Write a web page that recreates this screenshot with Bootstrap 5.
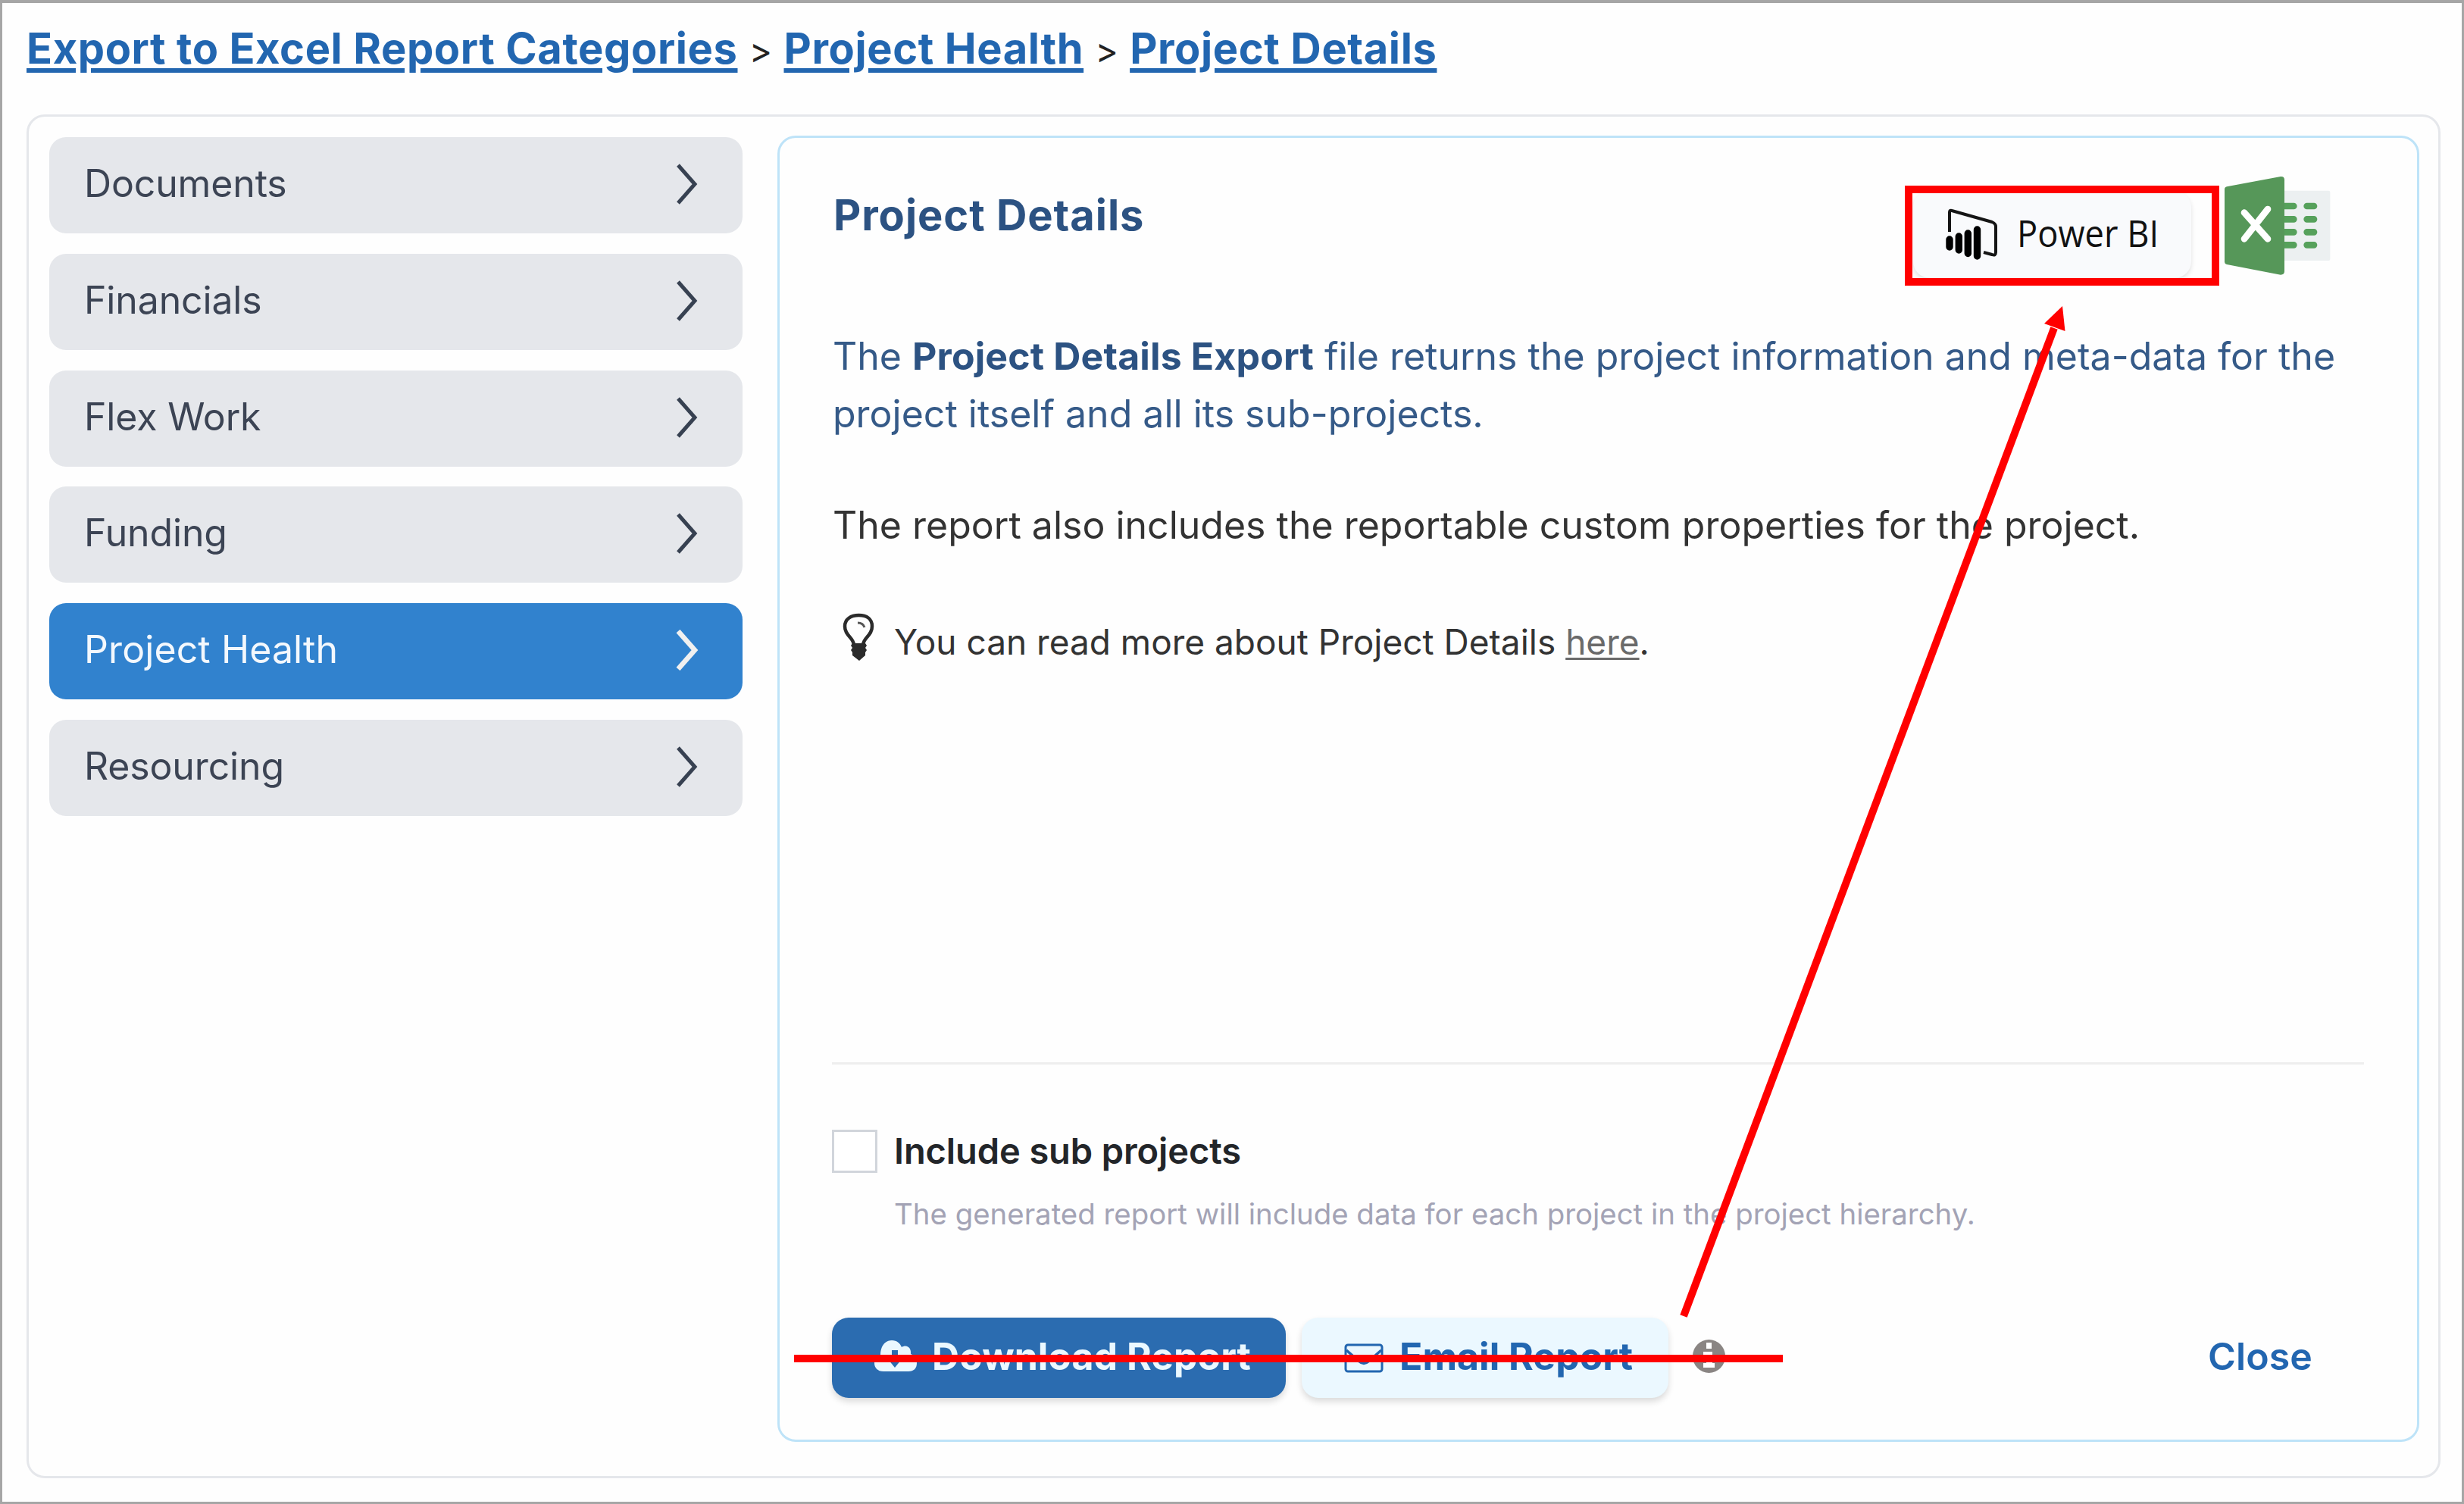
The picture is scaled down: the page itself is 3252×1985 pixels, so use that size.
<!DOCTYPE html>
<html lang="en">
<head>
<meta charset="utf-8">
<title>Project Details</title>
<link href="https://cdn.jsdelivr.net/npm/bootstrap@5.3.0/dist/css/bootstrap.min.css" rel="stylesheet">
<style>
  body { margin: 0; background: #fefefe; font-family: Inter, "Liberation Sans", sans-serif; color: #333; }
  .page-frame { width: 3252px; height: 1985px; border: 3px solid #a6a6a6; border-top-width: 4px; box-sizing: border-box; padding: 20px 28px 0 32px; overflow: hidden; }
  .crumbs { height: 127px; line-height: 80px; font-size: 56px; font-weight: 700; letter-spacing: .61px; }
  .crumbs a { color: #2266b0; text-decoration: underline; text-decoration-thickness: 6px; text-underline-offset: 6px; }
  .crumbs span { width: 61px; font-size: 46px; font-weight: 400; letter-spacing: 0; color: #222; padding-top: 2px; }
  .outer-panel { height: 1800px; border: 3px solid #e5e7eb; border-radius: 24px; padding: 25px 25px 45px 27px; gap: 46px; }
  .side-nav { width: 915px; gap: 26.8px; padding-top: 2px; }
  .side-nav .nav-link { height: 127px; border-radius: 22px; background: #e5e7eb; color: #3c4454; font-size: 50px; letter-spacing: -.15px; line-height: 76px; padding: 0 58px 5px 46px; }
  .side-nav .nav-link.active { background: #3182ce; color: #f3f8fd; letter-spacing: .1px; }
  .side-nav svg { width: 30px; height: 54px; margin-top: 2px; }
  .detail-card { border: 3px solid #bee3f8; border-radius: 24px; padding: 0 70px 55px 69px; background: #fefefe; }
  .detail-title { margin: 62px 0 0; font-size: 56px; line-height: 80px; font-weight: 700; letter-spacing: .95px; color: #2c5282; padding-left: 2px; }
  .bi-btn { width: 367px; height: 115px; margin-top: 70px; border-radius: 22px; background: #f9fafc; box-shadow: 0 3px 6px rgba(0,0,0,.12); padding-left: 43px; color: #111; border: 0; }
  .bi-btn svg { width: 68px; height: 69px; }
  .bi-btn span { font: 50px/70px "Open Sans", sans-serif; margin-left: 26px; padding-bottom: 6px; transform: scaleX(.905); transform-origin: left; white-space: nowrap; }
  .xl-icon { width: 140px; height: 132px; margin: 50px 44px 0 44px; }
  .report-text { font-size: 50px; line-height: 76px; white-space: nowrap; padding-left: 1px; }
  .report-text p { margin: 0 0 71px; }
  .report-text .intro { color: #355a88; }
  .report-text strong { font-weight: 700; letter-spacing: .14px; color: #2c5282; }
  .hint-line { font-size: 46px; line-height: 76px; padding-top: 7px; }
  .hint-line a { color: #6a6a6a; text-decoration: underline; text-decoration-thickness: 3px; text-underline-offset: 4px; }
  .hint-line svg { width: 44px; height: 64px; margin: -12px 25px 0 12px; }
  .split-line { height: 3px; background: #eee; }
  .opt-box { width: 60px; height: 57px; border: 3px solid #d1d5db; background: #fff; margin: 2px 22px 0 0; }
  .opt-label { font-size: 47px; line-height: 60px; font-weight: 600; letter-spacing: -.1px; color: #222529; }
  .opt-help { font-size: 38.4px; line-height: 50px; color: #a3a3b5; margin-top: 28px; }
  .act-btn { height: 106px; border-radius: 22px; font-size: 50px; line-height: 76px; font-weight: 700; letter-spacing: .02px; border: 0; padding: 0 0 5px; box-shadow: 0 5px 9px rgba(0,0,0,.14); white-space: nowrap; }
  .act-down { width: 599px; background: #2b6cb0; color: #ebf8ff; padding-left: 56px; }
  .act-down svg { width: 56px; height: 43px; margin-right: 20px; }
  .act-mail { width: 484px; margin-left: 21px; background: #ebf8ff; color: #2266b0; padding-left: 56px; }
  .act-mail svg { width: 53px; height: 39px; margin: 6px 20px 0 0; }
  .info-dot { width: 43px; height: 44px; margin-left: 32px; margin-top: -4px; }
  .close-link { font-size: 50px; line-height: 76px; font-weight: 600; letter-spacing: .1px; color: #2266b0; text-decoration: none; margin-right: 68px; padding-bottom: 5px; }
  .markup { position: absolute; left: 0; top: 0; pointer-events: none; }
</style>
</head>
<body>
<div class="page-frame">
  <nav class="crumbs d-flex align-items-start">
    <a href="#">Export to Excel Report Categories</a><span class="text-center">&gt;</span><a href="#">Project Health</a><span class="text-center">&gt;</span><a href="#">Project Details</a>
  </nav>

  <main class="outer-panel d-flex">
    <div class="side-nav nav flex-column flex-nowrap flex-shrink-0">
      <a class="nav-link d-flex align-items-center justify-content-between" href="#">Documents<svg viewBox="0 0 30 54"><path d="M3 2 L25 27 L3 52" fill="none" stroke="#374151" stroke-width="5"/></svg></a>
      <a class="nav-link d-flex align-items-center justify-content-between" href="#">Financials<svg viewBox="0 0 30 54"><path d="M3 2 L25 27 L3 52" fill="none" stroke="#374151" stroke-width="5"/></svg></a>
      <a class="nav-link d-flex align-items-center justify-content-between" href="#">Flex Work<svg viewBox="0 0 30 54"><path d="M3 2 L25 27 L3 52" fill="none" stroke="#374151" stroke-width="5"/></svg></a>
      <a class="nav-link d-flex align-items-center justify-content-between" href="#">Funding<svg viewBox="0 0 30 54"><path d="M3 2 L25 27 L3 52" fill="none" stroke="#374151" stroke-width="5"/></svg></a>
      <a class="nav-link active d-flex align-items-center justify-content-between" href="#">Project Health<svg viewBox="0 0 30 54"><path d="M3 2 L25 27 L3 52" fill="none" stroke="#f0f0f0" stroke-width="6.5"/></svg></a>
      <a class="nav-link d-flex align-items-center justify-content-between" href="#">Resourcing<svg viewBox="0 0 30 54"><path d="M3 2 L25 27 L3 52" fill="none" stroke="#374151" stroke-width="5"/></svg></a>
    </div>

    <section class="detail-card d-flex flex-column flex-grow-1">
      <header class="d-flex align-items-start" style="height:250px">
        <h1 class="detail-title me-auto">Project Details</h1>
        <button class="bi-btn d-flex align-items-center" type="button">
          <svg viewBox="0 0 68 69">
            <path d="M5 31V5Q5 2 8 3L61 18Q66 20 66 24V58Q66 63 61 61L50 58" fill="none" stroke="#151515" stroke-width="4"/>
            <g stroke="#000" stroke-width="9.4" stroke-linecap="round"><path d="M5 41V51M17.3 37V55M29.3 33V59.500M41.500 28V63"/></g>
          </svg>
          <span>Power BI</span>
        </button>
        <svg class="xl-icon" viewBox="48 36 420 396">
          <rect x="270" y="95" width="196" height="277" rx="6" fill="#ecf0f1"/>
          <g stroke="#56a15b" stroke-width="26" stroke-linecap="round"><path d="M270 156H322M270 208H322M270 259H322M270 310H322M374 156H402M374 208H402M374 259H402M374 310H402"/></g>
          <path d="M48 90Q48 81 57 79L270 39Q285 38 285 52V414Q285 428 270 428L57 387Q48 385 48 376Z" fill="#569759"/>
          <path d="M126 182L219 286M219 168L126 286" stroke="#fff" stroke-width="26" stroke-linecap="round"/>
        </svg>
      </header>

      <div class="report-text">
        <p class="intro">The <strong>Project Details Export</strong> file returns the project information and meta-data for the<br>project itself and all its sub-projects.</p>
        <p>The report also includes the reportable custom properties for the project.</p>
        <div class="hint-line d-flex align-items-center">
          <svg viewBox="0 0 44 64">
            <path d="M16 42C15 32 4 30 4 17.500C4 8 12 3 22.500 3S40 8 40 17.500C40 30 29 32 28 42" fill="none" stroke="#2b2b2b" stroke-width="4.500"/>
            <path d="M21 13Q28 13 30 19" fill="none" stroke="#555" stroke-width="3"/>
            <path d="M14 40H31L33 43L31 46L33 49L31 52V56L23 63L14 56V52L12 49L14 46L12 43Z" fill="#2b2b2b"/>
          </svg>
          <span>You can read more about Project Details <a href="#">here</a>.</span>
        </div>
      </div>

      <div class="mt-auto">
        <div class="split-line"></div>
        <div class="d-flex align-items-start" style="height:334px;padding-top:84px">
          <div class="opt-box flex-shrink-0"></div>
          <div>
            <div class="opt-label">Include sub projects</div>
            <div class="opt-help">The generated report will include data for each project in the project hierarchy.</div>
          </div>
        </div>
        <footer class="d-flex align-items-center">
          <button type="button" class="act-btn act-down d-flex align-items-center">
            <svg viewBox="0 0 56 43"><path d="M12 42C4 42 0 37 0 31C0 25 4 21 8 20C8 9 14 1 23 1C30 1 34 5 36 10C42 6 49 10 48 19C53 21 56 25 56 31C56 38 52 42 45 42Z" fill="#ebf8ff"/><path d="M23 14H31V26H36L27 37L18 26H23Z" fill="#2b6cb0"/></svg>
            Download Report
          </button>
          <button type="button" class="act-btn act-mail d-flex align-items-center">
            <svg viewBox="0 0 53 39"><rect x="2" y="2" width="48" height="35" rx="3" fill="none" stroke="#2266b0" stroke-width="3"/><path d="M3 9L20 24Q26 29 32 24L49 9" fill="none" stroke="#2266b0" stroke-width="3.500"/></svg>
            Email Report
          </button>
          <svg class="info-dot" viewBox="0 0 43 44"><ellipse cx="21.500" cy="22" rx="21.500" ry="22" fill="#8a8583"/><path d="M18 4H25V12H18ZM14 16H26V31H29V37H14V31H18V21H14Z" fill="#fff"/></svg>
          <a class="close-link ms-auto" href="#">Close</a>
        </footer>
      </div>
    </section>
  </main>
</div>

<!-- Red callouts drawn over the dialog -->
<svg class="markup" width="3252" height="1985" viewBox="0 0 3252 1985">
  <rect x="2519" y="250" width="405" height="122" fill="none" stroke="#f00" stroke-width="10"/>
  <path d="M2222 1737L2711 433" stroke="#f00" stroke-width="10"/>
  <path d="M2722 404L2698 427L2725.500 437Z" fill="#f00"/>
  <path d="M1048 1793H2353" stroke="#f00" stroke-width="10"/>
</svg>
<script src="https://cdn.jsdelivr.net/npm/bootstrap@5.3.0/dist/js/bootstrap.bundle.min.js"></script>
</body>
</html>
